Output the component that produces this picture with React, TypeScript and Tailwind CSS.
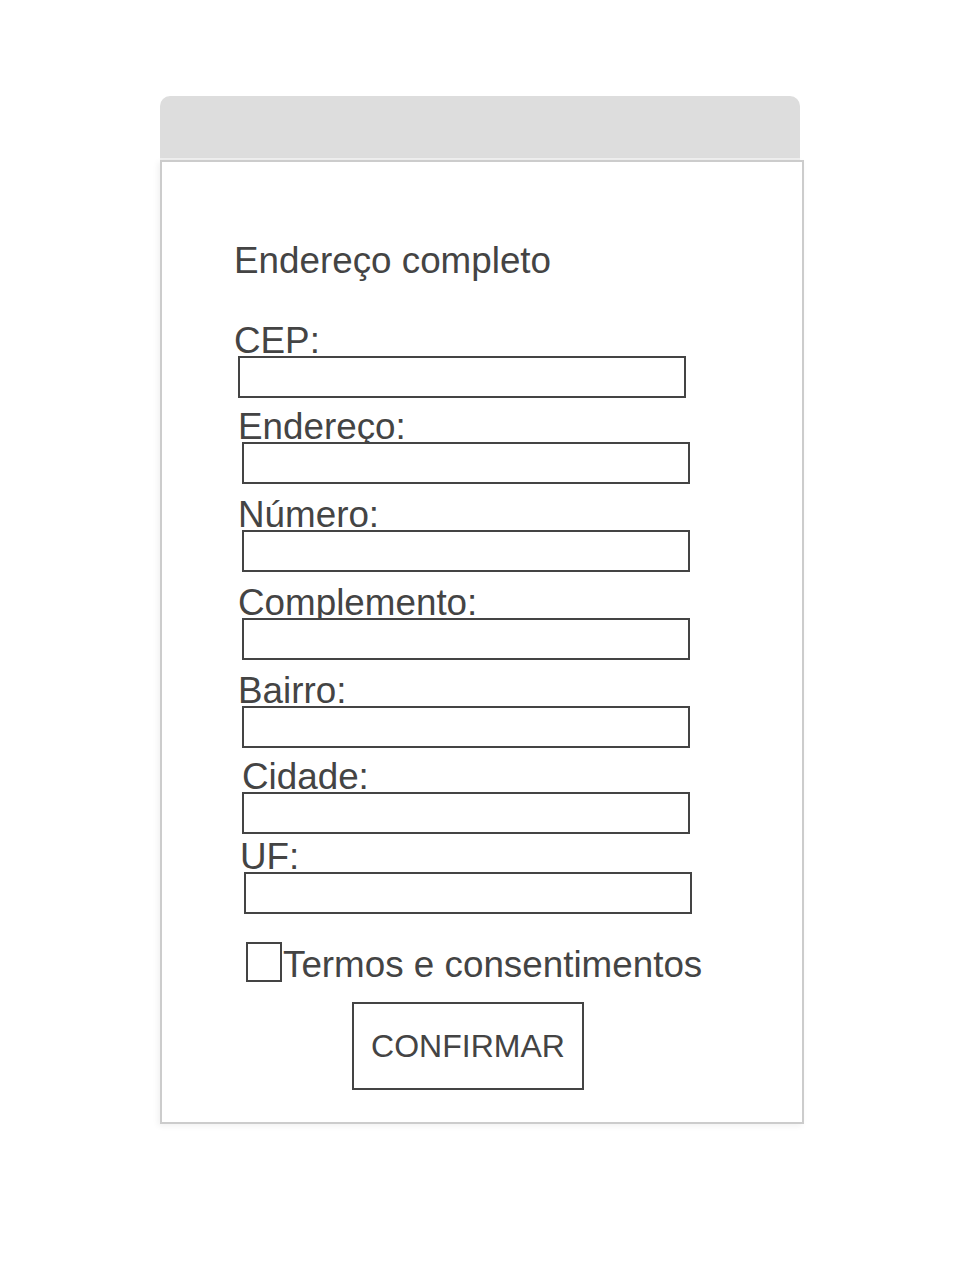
import React from 'react';

const FIELDS = [
   { label: 'CEP:', labelMt: 'mt-[52px]', labelMl: 'ml-[2px]', inputMl: 'ml-[6px]' },
   { label: 'Endereço:', labelMt: 'mt-[14px]', labelMl: 'ml-[6px]', inputMl: 'ml-[10px]' },
   { label: 'Número:', labelMt: 'mt-[16px]', labelMl: 'ml-[6px]', inputMl: 'ml-[10px]' },
   { label: 'Complemento:', labelMt: 'mt-[16px]', labelMl: 'ml-[6px]', inputMl: 'ml-[10px]' },
   { label: 'Bairro:', labelMt: 'mt-[16px]', labelMl: 'ml-[6px]', inputMl: 'ml-[10px]' },
   { label: 'Cidade:', labelMt: 'mt-[14px]', labelMl: 'ml-[10px]', inputMl: 'ml-[10px]' },
   { label: 'UF:', labelMt: 'mt-[8px]', labelMl: 'ml-[8px]', inputMl: 'ml-[12px]' },
];

const App = () => {
   return (
      <div className="min-h-[1280px] bg-white pt-[96px] pl-[160px] text-[#444444] font-['Liberation_Sans',Arial,sans-serif]">
         <div className="w-[640px] h-[64px] bg-[#dddddd] rounded-t-[10px] border-b-2 border-[#efefef]" />

         <div className="w-[644px] border-2 border-[#cccccc] bg-white shadow-[-2px_2px_6px_rgba(0,0,0,0.06)] pl-[70px] pt-[82px] pb-[32px]">
            <h1 className="text-[36.8px] h-[30px] leading-[34px] ml-[2px] whitespace-nowrap">Endereço completo</h1>

            {FIELDS.map(field => (
               <div key={field.label}>
                  <div className={`text-[36.8px] h-[30px] leading-[30px] whitespace-nowrap ${field.labelMt} ${field.labelMl}`}>
                     {field.label}
                  </div>
                  <input
                     type="text"
                     className={`relative block w-[448px] h-[42px] border-2 border-[#444444] bg-white outline-none ${field.inputMl}`}
                  />
               </div>
            ))}

            <label className="flex items-start mt-[28px] ml-[14px]">
               <span className="block w-[36px] h-[40px] border-2 border-[#444444] bg-white" />
               <span className="text-[36.8px] h-[30px] leading-[34px] mt-[6px] ml-[1px] whitespace-nowrap">Termos e consentimentos</span>
            </label>

            <button className="mt-[20px] ml-[120px] w-[232px] h-[88px] border-2 border-[#444444] bg-white text-[32px] leading-none text-[#444444]">
               CONFIRMAR
            </button>
         </div>
      </div>
   );
};

export default App;
